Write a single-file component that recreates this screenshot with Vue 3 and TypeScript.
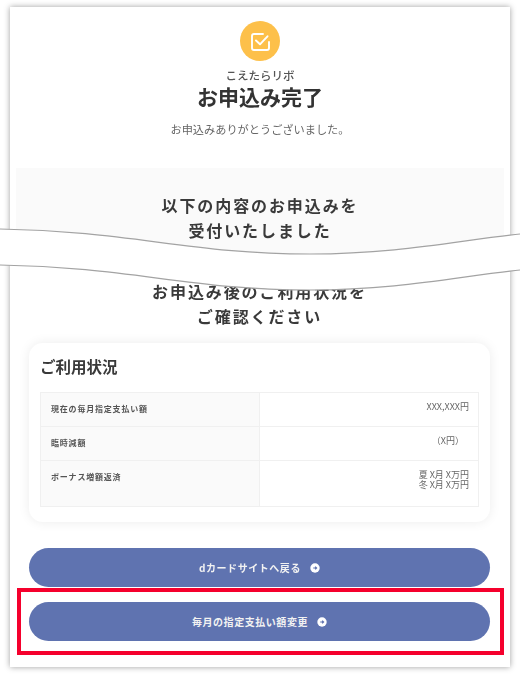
<script setup lang="ts">
interface Row {
  label: string
  values: string[]
  inset?: boolean
}

const rows: Row[] = [
  { label: '現在の毎月指定支払い額', values: ['XXX,XXX円'] },
  { label: '臨時減額', values: ['（X円）'], inset: true },
  { label: 'ボーナス増額返済', values: ['夏 X月 X万円', '冬 X月 X万円'] },
]
</script>

<template>
  <div class="page">
    <main class="sheet">
      <div class="content">
        <header class="head">
          <div class="badge">
            <svg width="20" height="20" viewBox="0 0 20 20" fill="none" stroke="#fff" stroke-width="1.9" stroke-linecap="round" stroke-linejoin="round">
              <path d="M19 11v6a2 2 0 0 1-2 2H4a2 2 0 0 1-2-2V5a2 2 0 0 1 2-2h9" />
              <path d="M6 9.5l4 3.8 7.5-8" />
            </svg>
          </div>
          <p class="service">こえたらリボ</p>
          <h1 class="title">お申込み完了</h1>
          <p class="thanks">お申込みありがとうございました。</p>
        </header>

        <section class="notice">
          <h2 class="lead">以下の内容のお申込みを<br />受付いたしました</h2>
        </section>

        <section class="status">
          <h2 class="lead">お申込み後のご利用状況を<br />ご確認ください</h2>

          <div class="card">
            <h3 class="card-title">ご利用状況</h3>
            <div class="table" role="table">
              <div v-for="r in rows" :key="r.label" class="row">
                <div class="label">{{ r.label }}</div>
                <div class="value" :class="{ inset: r.inset }">
                  <div v-for="v in r.values" :key="v">{{ v }}</div>
                </div>
              </div>
            </div>
          </div>
        </section>

        <div class="actions">
          <a class="btn">
            <span>dカードサイトへ戻る</span>
            <svg class="arrow" width="10" height="10" viewBox="0 0 10 10">
              <circle cx="5" cy="5" r="4.7" fill="#fff" />
              <path d="M3.2 5h3.2M5.2 3.6L6.6 5 5.2 6.4" fill="none" stroke="#5f73b0" stroke-width="1.2" />
            </svg>
          </a>
          <div class="btn-wrap">
            <a class="btn">
              <span>毎月の指定支払い額変更</span>
              <svg class="arrow" width="10" height="10" viewBox="0 0 10 10">
                <circle cx="5" cy="5" r="4.7" fill="#fff" />
                <path d="M3.2 5h3.2M5.2 3.6L6.6 5 5.2 6.4" fill="none" stroke="#5f73b0" stroke-width="1.2" />
              </svg>
            </a>
            <div class="highlight"></div>
          </div>
        </div>
      </div>
    </main>

    <svg class="tear" width="520" height="70" viewBox="0 0 520 70">
      <path d="M0 1C130 3 190 26 310 26C400 26 460 12 520 6V42C460 48 400 62 310 62C190 62 130 39 0 37Z" fill="#fff" />
      <path d="M0 1C130 3 190 26 310 26C400 26 460 12 520 6" fill="none" stroke="#a3a3a3" stroke-width="1.2" />
      <path d="M0 37C130 39 190 62 310 62C400 62 460 48 520 42" fill="none" stroke="#a3a3a3" stroke-width="1.2" />
    </svg>
  </div>
</template>

<style>
html,
body {
  margin: 0;
  background: #fff;
}
</style>

<style scoped>
.page {
  position: relative;
  width: 520px;
  height: 674px;
  padding: 7px 10px;
  box-sizing: border-box;
  overflow: hidden;
  font-family: 'Noto Sans CJK JP', 'Liberation Sans', sans-serif;
}

.sheet {
  height: 660px;
  background: #fff;
  box-shadow: 0 0 6px rgba(0, 0, 0, 0.38);
}

.content {
  display: flex;
  flex-direction: column;
  height: 100%;
  filter: blur(0.6px);
}

.head {
  display: flex;
  flex-direction: column;
  align-items: center;
  padding-top: 14px;
  height: 161px;
  box-sizing: border-box;
}

.badge {
  display: flex;
  align-items: center;
  justify-content: center;
  width: 40px;
  height: 40px;
  border-radius: 50%;
  background: #fdc04a;
}

.service {
  margin: 7px 0 0;
  font-size: 11.5px;
  line-height: 14px;
  font-weight: 500;
  color: #555;
}

.title {
  margin: 0;
  font-size: 21px;
  line-height: 29px;
  font-weight: 700;
  color: #333;
}

.thanks {
  margin: 10px 0 0;
  font-size: 11.2px;
  line-height: 16px;
  color: #666;
}

.notice {
  margin: 0 6px;
  height: 98px;
  padding-top: 25px;
  box-sizing: border-box;
  background: #fafafa;
}

.lead {
  margin: 0;
  text-align: center;
  font-size: 16px;
  line-height: 24.5px;
  font-weight: 700;
  letter-spacing: 1.9px;
  color: #3a3a3a;
}

.status {
  padding: 13px 20px 0 19px;
}

.card {
  margin-top: 15px;
  height: 179px;
  padding: 13px 11px 0;
  box-sizing: border-box;
  border-radius: 14px;
  background: #fff;
  box-shadow: 0 0 12px rgba(0, 0, 0, 0.08);
}

.card-title {
  margin: 0 0 16px;
  font-size: 15.5px;
  line-height: 20px;
  font-weight: 700;
  color: #3a3a3a;
}

.table {
  border: 1px solid #f0f0f0;
  font-size: 8px;
}

.row {
  display: grid;
  grid-template-columns: 219px 1fr;
  min-height: 33px;
  border-bottom: 1px solid #f0f0f0;
}

.row:last-child {
  min-height: 45px;
  border-bottom: 0;
}

.label {
  padding: 9px 10px 0;
  line-height: 14px;
  font-weight: 700;
  letter-spacing: 0.8px;
  color: #555;
  background: #fafafa;
  border-right: 1px solid #f0f0f0;
}

.value {
  padding: 9px 9px 0 0;
  text-align: right;
  font-size: 9px;
  line-height: 10px;
  color: #666;
}

.value.inset {
  padding-right: 14px;
}

.actions {
  display: flex;
  flex-direction: column;
  gap: 15px;
  padding: 26px 20px 0 19px;
}

.btn-wrap {
  position: relative;
}

.btn {
  display: flex;
  align-items: center;
  justify-content: center;
  gap: 7px;
  height: 39px;
  border-radius: 20px;
  background: #5f73b0;
  color: #f2f2f2;
  font-size: 10px;
  font-weight: 700;
  letter-spacing: 0.55px;
}

.arrow {
  flex: none;
  margin-left: 2px;
}

.highlight {
  position: absolute;
  left: -12px;
  right: -14px;
  top: -14px;
  bottom: -14px;
  border: 4px solid #f5002d;
}

.tear {
  position: absolute;
  left: 0;
  top: 228px;
}
</style>
